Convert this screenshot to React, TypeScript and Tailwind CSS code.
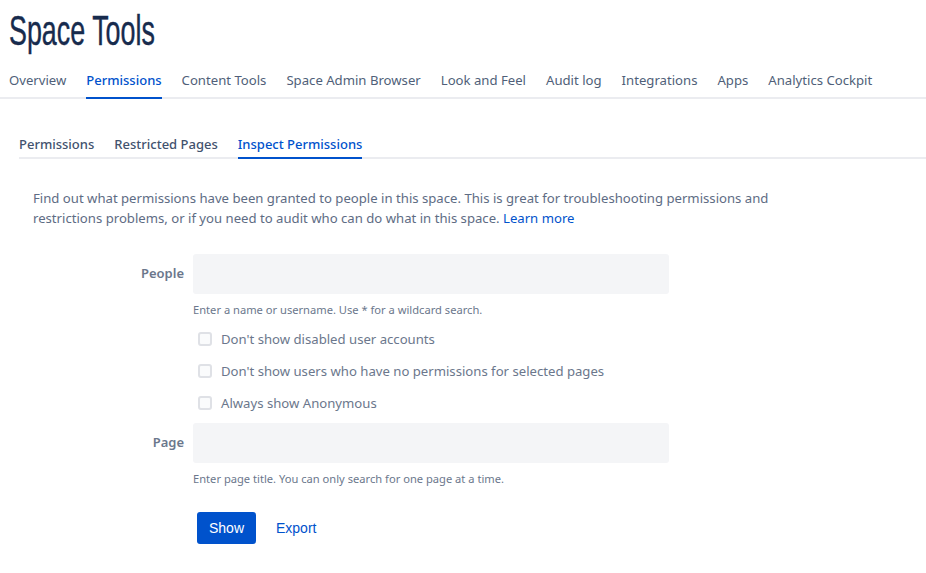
const mainTabs = ["Overview", "Permissions", "Content Tools", "Space Admin Browser", "Look and Feel", "Audit log", "Integrations", "Apps", "Analytics Cockpit"];
const subTabs = ["Permissions", "Restricted Pages", "Inspect Permissions"];
const checks = ["Don't show disabled user accounts", "Don't show users who have no permissions for selected pages", "Always show Anonymous"];

const Field = ({ label, hint }: { label: string; hint: string }) => (
  <div className="flex">
    <div className="w-[184px] shrink-0 pt-[9px] text-right text-[13px] leading-[20px] font-semibold text-[#6b778c]">{label}</div>
    <div className="ml-[9px]">
      <div className="h-[40px] w-[476px] rounded-[3px] bg-[#f4f5f7]" />
      <div className="mt-[7px] text-[11.15px] leading-[18px] text-[#6b778c]">{hint}</div>
    </div>
  </div>
);

export default function App() {
  return (
    <div className="h-[573px] w-[926px] overflow-hidden bg-white font-['Noto_Sans','Open_Sans',sans-serif] text-[13.15px]">
      <h1 className="origin-left scale-x-[0.64] pl-[14px] pt-[9px] font-['Liberation_Sans',sans-serif] text-[42px] leading-[44px] font-normal text-[#172b4d] [-webkit-text-stroke:0.4px_#172b4d]">Space Tools</h1>

      <nav className="mt-[7px] flex h-[39px] gap-[20px] border-b-2 border-[#ebecf0] pl-[9px]">
        {mainTabs.map((t) => (
          <div key={t} className={t === "Permissions" ? "h-[39px] border-b-2 border-[#0052cc] pt-[10px] text-[13px] leading-[20px] font-medium text-[#0052cc]" : "pt-[10px] leading-[20px] text-[#505f79]"}>{t}</div>
        ))}
      </nav>

      <div className="mt-[35px] ml-[19px] flex h-[25px] gap-[20px] border-b-2 border-[#ebecf0] text-[13px]">
        {subTabs.map((t) => (
          <div key={t} className={t === "Inspect Permissions" ? "h-[25px] border-b-2 border-[#0052cc] leading-[20px] font-medium text-[#0052cc]" : "leading-[20px] font-medium text-[#42526e]"}>{t}</div>
        ))}
      </div>

      <p className="mt-[29px] ml-[33px] w-[760px] leading-[20px] text-[#5e6c84]">
        Find out what permissions have been granted to people in this space. This is great for troubleshooting permissions and restrictions problems, or if you need to audit who can do what in this space. <span className="text-[#0052cc]">Learn more</span>
      </p>

      <div className="mt-[26px]">
        <Field label="People" hint="Enter a name or username. Use * for a wildcard search." />
        <div className="mt-[10px] ml-[198px] flex flex-col gap-[12px]">
          {checks.map((c) => (
            <div key={c} className="flex h-[20px] items-center gap-[9px]">
              <div className="h-[14px] w-[14px] rounded-[3px] border-2 border-[#dfe1e6] bg-[#fafbfc]" />
              <span className="leading-[20px] text-[#6b778c]">{c}</span>
            </div>
          ))}
        </div>
        <div className="mt-[10px]">
          <Field label="Page" hint="Enter page title. You can only search for one page at a time." />
        </div>
        <div className="mt-[24px] ml-[197px] flex items-center gap-[20px] font-['Liberation_Sans',sans-serif] text-[14px]">
          <div className="flex h-[32px] w-[59px] items-center justify-center rounded-[3px] bg-[#0052cc] text-white">Show</div>
          <div className="text-[#0052cc]">Export</div>
        </div>
      </div>
    </div>
  );
}
